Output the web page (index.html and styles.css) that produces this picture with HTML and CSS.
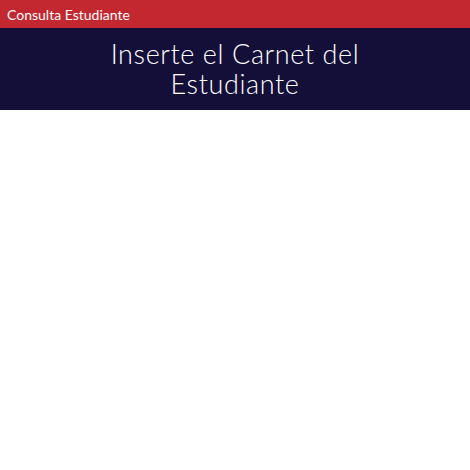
FILE: index.html
```html
<!DOCTYPE html>
<html lang="es">
<head>
<meta charset="utf-8">
<link rel="stylesheet" href="styles.css">
</head>
<body>
<div class="topbar">Consulta Estudiante</div>
<header class="hero">
  <h1 class="title">Inserte el Carnet del<br>Estudiante</h1>
</header>
</body>
</html>
```
FILE: styles.css
```css
html, body {
  margin: 0;
  padding: 0;
  background: #ffffff;
  font-family: "Lato", "Open Sans", sans-serif;
}
.topbar {
  background: #c3272f;
  color: #ffffff;
  height: 28px;
  line-height: 28px;
  padding-left: 7px;
  font-size: 14px;
  box-sizing: border-box;
  padding-top: 1px;
}
.hero {
  background: #140f38;
  height: 82px;
  display: flex;
  align-items: center;
  justify-content: center;
}
.title {
  margin: 0;
  color: #ffffff;
  font-weight: 300;
  font-size: 27px;
  line-height: 30px;
  text-align: center;
  letter-spacing: 0.6px;
}
```
